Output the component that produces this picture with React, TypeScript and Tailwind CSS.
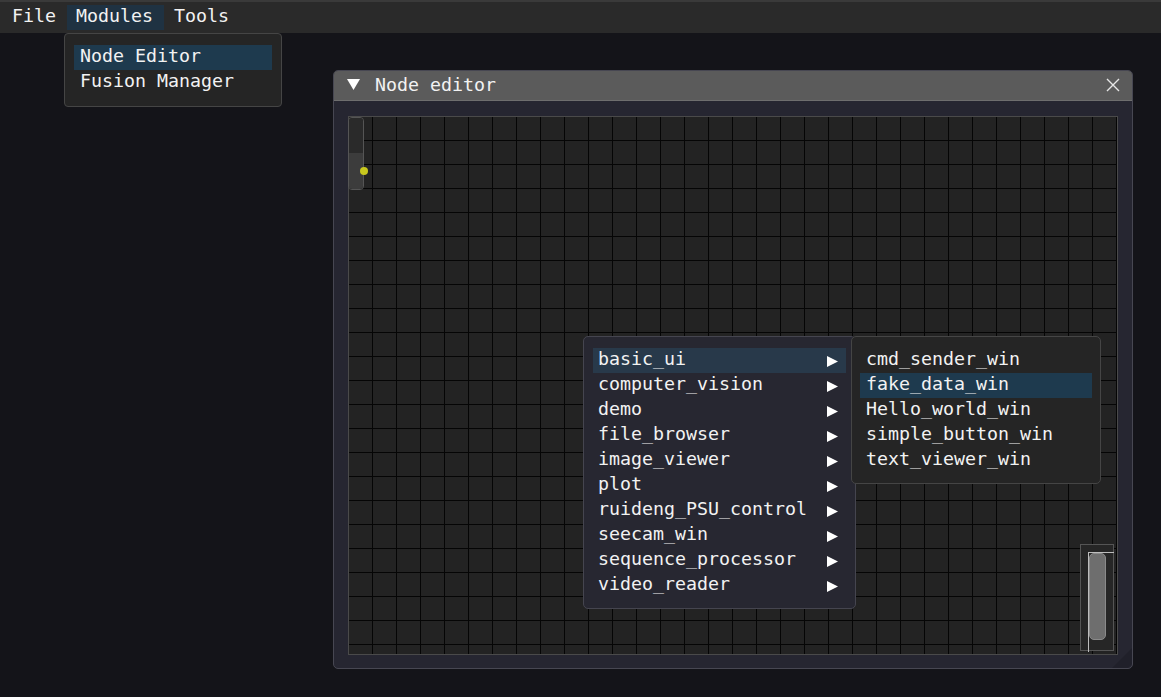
import React from "react";

const mono = { fontFamily: '"DejaVu Sans Mono", "Liberation Mono", monospace' };

function Arrow() {
  return (
    <svg width="13" height="11" viewBox="0 0 13 11" className="mt-[8px] shrink-0">
      <polygon points="1,0 12,5.5 1,11" fill="#ffffff" />
    </svg>
  );
}

const groups = [
  "basic_ui",
  "computer_vision",
  "demo",
  "file_browser",
  "image_viewer",
  "plot",
  "ruideng_PSU_control",
  "seecam_win",
  "sequence_processor",
  "video_reader",
];

const subs = [
  "cmd_sender_win",
  "fake_data_win",
  "Hello_world_win",
  "simple_button_win",
  "text_viewer_win",
];

export default function App() {
  return (
    <div
      className="relative w-[1161px] h-[697px] overflow-hidden bg-[#141419] text-[18.3px] leading-[21px] text-[#f2f2f2]"
      style={mono}
    >
      {/* Menu bar */}
      <div className="flex h-[33px] items-center border-t-2 border-[#3a3a3a] bg-[#2a2a2a] pl-[3px]">
        <div className="h-[25px] px-[9px]">File</div>
        <div className="ml-[2px] h-[25px] bg-[#1f3242] pl-[9px] pr-[11px]">Modules</div>
        <div className="h-[25px] px-[10px]">Tools</div>
      </div>

      {/* Modules dropdown */}
      <div className="absolute left-[64px] top-[33px] w-[218px] rounded-[4px] border border-[#454545] bg-[#252525] px-[9px] py-[11px]">
        <div className="h-[25px] bg-[#1e3a4e] px-[6px]">Node Editor</div>
        <div className="h-[25px] px-[6px]">Fusion Manager</div>
      </div>

      {/* Node editor window */}
      <div className="absolute left-[333px] top-[70px] flex h-[599px] w-[800px] flex-col rounded-[5px] border border-[#474752] bg-[#262631]">
        <div className="flex h-[30px] shrink-0 items-center rounded-t-[4px] border-b border-[#6e6e6e] bg-[#5b5b5b] pl-[13px] pr-[12px]">
          <svg width="13" height="11" viewBox="0 0 13 11" className="mt-[-2px]">
            <polygon points="0,0 13,0 6.5,11" fill="#ffffff" />
          </svg>
          <span className="ml-[15px] mt-[-3px]">Node editor</span>
          <div className="flex-1" />
          <svg width="14" height="14" viewBox="0 0 14 14" className="mt-[-2px]">
            <path d="M1 1 L13 13 M13 1 L1 13" stroke="#e6e6e6" strokeWidth="1.4" />
          </svg>
        </div>
        <div className="flex flex-1 px-[14px] pt-[15px] pb-[13px]">
          <div className="relative flex-1 border border-[#4a4a4a] bg-[#232323] bg-[linear-gradient(to_right,transparent_23px,#050505_23px,#050505_24px),linear-gradient(to_bottom,transparent_23px,#050505_23px,#050505_24px)] bg-[length:24px_24px]">
            {/* left node pill */}
            <div className="absolute left-[-1px] top-0 flex h-[73px] w-[16px] flex-col overflow-hidden rounded-[4px] border border-[#555555]">
              <div className="h-[35px] bg-[#2a2a2a]" />
              <div className="flex-1 bg-[#3c3c3c]" />
            </div>
            <div className="absolute left-[11px] top-[50px] h-[8px] w-[8px] rounded-full bg-[#c8c81e]" />

            {/* minimap / scroll */}
            <div className="absolute right-[3px] bottom-[3px] h-[107px] w-[34px] border border-[#555555] bg-[#262626]">
              <div className="absolute left-[7px] top-[7px] h-[100px] w-[26px] border-l border-t border-[#bdbdbd]" />
              <div className="absolute left-[8px] top-[8px] h-[87px] w-[17px] rounded-[5px] border border-[#8a8a8a] bg-[#6e6e6e]" />
            </div>
          </div>
        </div>
        <svg className="absolute right-0 bottom-0" width="20" height="20" viewBox="0 0 20 20">
          <polygon points="20,0 20,16 16,20 0,20" fill="#20202a" />
        </svg>
      </div>

      {/* Context menu */}
      <div className="absolute left-[583px] top-[336px] w-[273px] rounded-[5px] border border-[#45454f] bg-[#272731] px-[9px] pt-[11px] pb-[10px]">
        {groups.map((g, i) => (
          <div
            key={g}
            className={
              i === 0
                ? "flex h-[25px] items-start bg-[#28394a] pl-[5px] pr-[7px]"
                : "flex h-[25px] items-start pl-[5px] pr-[7px]"
            }
          >
            <span className="flex-1">{g}</span>
            <Arrow />
          </div>
        ))}
      </div>

      {/* Submenu */}
      <div className="absolute left-[851px] top-[336px] w-[250px] rounded-[5px] border border-[#454545] bg-[#252525] px-[8px] pt-[11px] pb-[10px]">
        {subs.map((s, i) => (
          <div
            key={s}
            className={i === 1 ? "h-[25px] bg-[#1e3a4e] pl-[6px]" : "h-[25px] pl-[6px]"}
          >
            {s}
          </div>
        ))}
      </div>
    </div>
  );
}
